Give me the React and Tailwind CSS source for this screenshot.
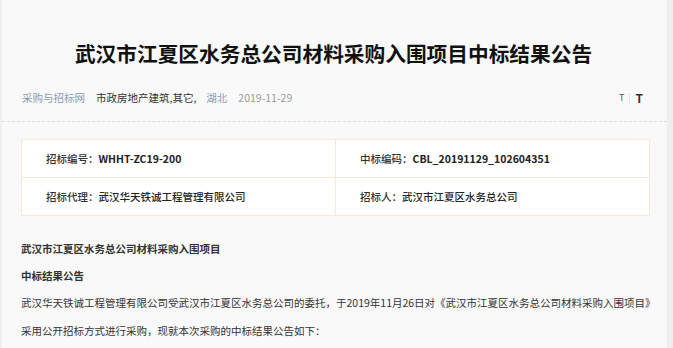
const FONT = { fontFamily: '"Noto Sans CJK SC", "Noto Sans", sans-serif' };

function Cell({ label, value, bold = true, left = false }) {
  return (
    <div className={`flex items-center pl-[24px] ${left ? "border-r border-[#fde6d8]" : ""}`}>
      <span className="text-[#333] font-medium">{label}</span>
      <span className={`text-[#222] ${bold ? "font-bold" : "font-medium"}`}>{value}</span>
    </div>
  );
}

export default function App() {
  return (
    <div className="w-[673px] h-[348px] bg-[#efefef] overflow-hidden flex" style={FONT}>
      <div className="ml-[2px] w-[665px] h-full bg-[#f9f9f9]">
        <h1 className="pt-[38px] text-center text-[20.7px] leading-[30px] font-bold text-[#111] pr-[2px]">
          武汉市江夏区水务总公司材料采购入围项目中标结果公告
        </h1>

        <div className="mt-[22px] flex items-center h-[16px] pl-[20px] pr-[24px] text-[10.5px]">
          <span className="text-[#8a9bb0]">采购与招标网</span>
          <span className="ml-[11px] text-[#333]">市政房地产建筑,其它,</span>
          <span className="ml-[10px] text-[#8a9bb0]">湖北</span>
          <span className="ml-[11px] text-[#999]">2019-11-29</span>
          <div className="ml-auto flex items-center">
            <span className="text-[9px] text-[#556]">T</span>
            <span className="mx-[5px] w-px h-[11px] bg-[#e3e3e3]" />
            <span className="text-[12px] font-bold text-[#333]">T</span>
          </div>
        </div>

        <div className="mt-[15px] border-t border-dashed border-[#dcdcdc]" />

        <div className="mt-[17px] ml-[19px] w-[629px] bg-white border border-[#fde6d8] text-[10.5px]">
          <div className="grid grid-cols-[314px_1fr] h-[38px] border-b border-[#fde6d8]">
            <Cell left label="招标编号：" value="WHHT-ZC19-200" />
            <Cell label="中标编码：" value="CBL_20191129_102604351" />
          </div>
          <div className="grid grid-cols-[314px_1fr] h-[37px]">
            <Cell left label="招标代理：" value="武汉华天铁诚工程管理有限公司" bold={false} />
            <Cell label="招标人：" value="武汉市江夏区水务总公司" bold={false} />
          </div>
        </div>

        <div className="mt-[20px] pl-[19px] text-[10.5px] text-[#333]">
          <p className="h-[26px] leading-[26px] font-bold">武汉市江夏区水务总公司材料采购入围项目</p>
          <p className="h-[27px] leading-[27px] font-bold">中标结果公告</p>
          <p className="h-[28px] leading-[28px] whitespace-nowrap">
            武汉华天铁诚工程管理有限公司受武汉市江夏区水务总公司的委托，于2019年11月26日对《武汉市江夏区水务总公司材料采购入围项目》
          </p>
          <p className="h-[28px] leading-[28px]">采用公开招标方式进行采购，现就本次采购的中标结果公告如下：</p>
        </div>
      </div>
    </div>
  );
}
